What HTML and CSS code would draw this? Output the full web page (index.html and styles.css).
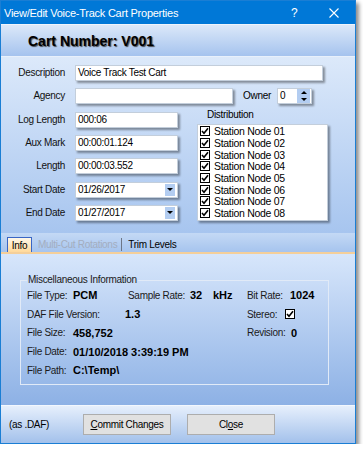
FILE: index.html
```html
<!DOCTYPE html>
<html>
<head>
<meta charset="utf-8">
<title>View/Edit Voice-Track Cart Properties</title>
<link rel="stylesheet" href="styles.css">
</head>
<body>
<div class="window">
  <div class="titlebar">
    <span class="title">View/Edit Voice-Track Cart Properties</span>
    <span class="help">?</span>
    <svg class="close" width="10" height="10" viewBox="0 0 10 10"><path d="M0.5 0.5 L9.5 9.5 M9.5 0.5 L0.5 9.5" stroke="#fff" stroke-width="1.1" fill="none"/></svg>
  </div>
  <div class="header"><span class="cartno">Cart Number: V001</span></div>
  <div class="form">
    <div class="row"><span class="lbl">Description</span><div class="field wide">Voice Track Test Cart</div></div>
    <div class="row"><span class="lbl">Agency</span><div class="field agency"></div><span class="owner-lbl">Owner</span>
      <div class="field spin"><span class="spinval">0</span><span class="spinbtns"><span class="sb"><span class="tri-up"></span></span><span class="sb"><span class="tri-down"></span></span></span></div>
    </div>
    <div class="lower">
      <div class="leftcol">
        <div class="row"><span class="lbl">Log Length</span><div class="field short">000:06</div></div>
        <div class="row"><span class="lbl">Aux Mark</span><div class="field short">00:00:01.124</div></div>
        <div class="row"><span class="lbl">Length</span><div class="field short">00:00:03.552</div></div>
        <div class="row"><span class="lbl">Start Date</span><div class="field short combo"><span class="combo-val">01/26/2017</span><span class="dd"><span class="tri-down"></span></span></div></div>
        <div class="row"><span class="lbl">End Date</span><div class="field short combo"><span class="combo-val">01/27/2017</span><span class="dd"><span class="tri-down"></span></span></div></div>
      </div>
      <div class="dist">
        <div class="dist-lbl">Distribution</div>
        <div class="listbox">
          <div class="item"><span class="cb"><svg width="8" height="8" viewBox="0 0 8 8"><path d="M1 4 L3 6.2 L7 1.2" stroke="#000" stroke-width="1.6" fill="none"/></svg></span>Station Node 01</div>
          <div class="item"><span class="cb"><svg width="8" height="8" viewBox="0 0 8 8"><path d="M1 4 L3 6.2 L7 1.2" stroke="#000" stroke-width="1.6" fill="none"/></svg></span>Station Node 02</div>
          <div class="item"><span class="cb"><svg width="8" height="8" viewBox="0 0 8 8"><path d="M1 4 L3 6.2 L7 1.2" stroke="#000" stroke-width="1.6" fill="none"/></svg></span>Station Node 03</div>
          <div class="item"><span class="cb"><svg width="8" height="8" viewBox="0 0 8 8"><path d="M1 4 L3 6.2 L7 1.2" stroke="#000" stroke-width="1.6" fill="none"/></svg></span>Station Node 04</div>
          <div class="item"><span class="cb"><svg width="8" height="8" viewBox="0 0 8 8"><path d="M1 4 L3 6.2 L7 1.2" stroke="#000" stroke-width="1.6" fill="none"/></svg></span>Station Node 05</div>
          <div class="item"><span class="cb"><svg width="8" height="8" viewBox="0 0 8 8"><path d="M1 4 L3 6.2 L7 1.2" stroke="#000" stroke-width="1.6" fill="none"/></svg></span>Station Node 06</div>
          <div class="item"><span class="cb"><svg width="8" height="8" viewBox="0 0 8 8"><path d="M1 4 L3 6.2 L7 1.2" stroke="#000" stroke-width="1.6" fill="none"/></svg></span>Station Node 07</div>
          <div class="item"><span class="cb"><svg width="8" height="8" viewBox="0 0 8 8"><path d="M1 4 L3 6.2 L7 1.2" stroke="#000" stroke-width="1.6" fill="none"/></svg></span>Station Node 08</div>
        </div>
      </div>
    </div>
  </div>
  <div class="tabs">
    <span class="tab active">Info</span>
    <span class="tab disabled">Multi-Cut Rotations</span>
    <span class="tabsep"></span>
    <span class="tab">Trim Levels</span>
  </div>
  <div class="panel">
    <fieldset class="group">
      <legend>Miscellaneous Information</legend>
      <div class="irow"><span class="k w46">File Type:</span><span class="v w55">PCM</span><span class="k w62">Sample Rate:</span><span class="v w23">32</span><span class="v w34">kHz</span><span class="k w43">Bit Rate:</span><span class="v">1024</span></div>
      <div class="irow"><span class="k w98">DAF File Version:</span><span class="v w122">1.3</span><span class="k w38">Stereo:</span><span class="cb"><svg width="8" height="8" viewBox="0 0 8 8"><path d="M1 4 L3 6.2 L7 1.2" stroke="#000" stroke-width="1.6" fill="none"/></svg></span></div>
      <div class="irow"><span class="k w46">File Size:</span><span class="v w174">458,752</span><span class="k w44">Revision:</span><span class="v">0</span></div>
      <div class="irow"><span class="k w46">File Date:</span><span class="v">01/10/2018 3:39:19 PM</span></div>
      <div class="irow"><span class="k w46">File Path:</span><span class="v">C:\Temp\</span></div>
    </fieldset>
  </div>
  <div class="footer">
    <span class="astype">(as .DAF)</span>
    <span class="btn"><u>C</u>ommit Changes</span>
    <span class="btn">Cl<u>o</u>se</span>
  </div>
</div>
</body>
</html>
```
FILE: styles.css
```css
* { box-sizing: border-box; }
html, body { margin: 0; padding: 0; background: #fff; }
body {
  font-family: "Liberation Sans", Arial, sans-serif;
  font-size: 10px;
  letter-spacing: -0.3px;
  color: #000;
}
.window {
  width: 356px;
  height: 444px;
  border: 1px solid #1a7ed4;
  box-shadow: 3px 3px 4px rgba(0, 0, 0, 0.45);
  display: flex;
  flex-direction: column;
  background: #c9dcf6;
}
.titlebar {
  height: 23px;
  flex: none;
  background: #0078d7;
  color: #fff;
  display: flex;
  align-items: center;
  padding-left: 3px;
  font-size: 11px;
  letter-spacing: -0.25px;
}
.title { flex: 1; }
.help { width: 8px; font-size: 12px; margin-right: 30px; }
.close { margin-right: 16px; }
.header {
  height: 33px;
  flex: none;
  background: linear-gradient(#dbe8f9, #a5c3ee);
  border-top: 1px solid #eef4fc;
  border-bottom: 1px solid #e8f0fb;
  padding-left: 27px;
  display: flex;
  align-items: center;
}
.cartno {
  font-weight: bold;
  font-size: 14px;
  letter-spacing: 0;
  text-shadow: 1px 1px 1px rgba(50, 50, 50, 0.85);
}
.form {
  height: 176px;
  flex: none;
  background: linear-gradient(#dce9fa, #a7c5ef);
  padding-top: 8px;
}
.row { display: flex; height: 23.33px; align-items: flex-start; }
.lbl { width: 64px; text-align: right; line-height: 15px; margin-right: 10px; color: #111; }
.field {
  height: 16px;
  background: #fff;
  border: 1px solid #c3cedb;
  box-shadow: 2px 2px 2px rgba(0, 0, 0, 0.38);
  line-height: 14px;
  padding-left: 2px;
}
.wide { width: 248px; }
.agency { width: 158px; }
.short { width: 103px; }
.owner-lbl { margin-left: 10px; width: 34px; line-height: 15px; }
.spin { width: 35px; display: flex; }
.spinval { flex: 1; }
.spinbtns { width: 13px; margin-right: 1px; display: flex; flex-direction: column; }
.sb { height: 7px; background: #b3cdf1; display: flex; align-items: center; justify-content: center; }
.tri-up { width: 0; height: 0; border-left: 3px solid transparent; border-right: 3px solid transparent; border-bottom: 3px solid #000; }
.tri-down { width: 0; height: 0; border-left: 3px solid transparent; border-right: 3px solid transparent; border-top: 3px solid #000; }
.combo { display: flex; }
.combo-val { flex: 1; }
.dd { width: 10px; height: 12px; margin: 1px 2px 0 0; background: #b3cdf1; display: flex; align-items: center; justify-content: center; }
.lower { display: flex; }
.leftcol { width: 177px; }
.dist { margin-left: 19px; margin-top: -3px; }
.dist-lbl { height: 12px; line-height: 12px; padding-left: 10px; margin-bottom: 3px; }
.listbox {
  width: 131px;
  height: 97px;
  background: #fff;
  border: 1px solid #c3cedb;
  box-shadow: 2px 2px 2px rgba(0, 0, 0, 0.38);
  padding: 1px 0 0 2px;
}
.item { height: 11.67px; display: flex; align-items: center; gap: 4px; font-size: 10.5px; }
.cb {
  width: 10px; height: 10px; flex: none;
  border: 1px solid #000; background: #fff;
  display: flex; align-items: center; justify-content: center;
}
.tabs {
  height: 21px;
  flex: none;
  display: flex;
  align-items: flex-end;
  padding-left: 6px;
  background: linear-gradient(#c4d9f5, #a6c4ee);
  border-bottom: 2px solid #f4cf9a;
}
.tab { height: 15px; line-height: 15px; padding: 0 4px 0 6px; }
.tab.active {
  width: 25px; padding: 0; text-align: center;
  border: 1px solid #3a66c4; border-bottom: none;
  background: linear-gradient(#fff8ea, #ffd99a);
}
.tab.disabled { color: #a3adbf; }
.tabsep { width: 1px; height: 13px; margin-bottom: 1px; background: #6d7686; }
.panel {
  height: 151px;
  flex: none;
  background: linear-gradient(#d7e6fb, #8db1e5);
  padding: 20px 0 0 19px;
}
.group {
  width: 309px;
  height: 111px;
  margin: 0;
  padding: 0 0 0 6px;
  border: 1px solid #e1eaf7;
}
.group legend { padding: 0 1px; line-height: 12px; color: #1a1a1a; }
.irow { display: flex; align-items: center; height: 18.75px; }
.k { color: #1a1a1a; }
.v { font-weight: bold; font-size: 11px; letter-spacing: 0; }
.w46 { width: 46px; }
.w55 { width: 55px; }
.w62 { width: 62px; }
.w23 { width: 23px; }
.w34 { width: 34px; }
.w43 { width: 43px; }
.w98 { width: 98px; }
.w122 { width: 122px; }
.w38 { width: 38px; }
.w174 { width: 174px; }
.w44 { width: 44px; }
.footer {
  height: 38px;
  flex: none;
  background: linear-gradient(#e6effc, #a3c1eb);
  border-top: 1px solid #f2f7fe;
  display: flex;
  align-items: center;
  padding-left: 8px;
}
.astype { width: 74px; }
.btn {
  width: 88px; height: 21px;
  background: #e1e1e1;
  border: 1px solid #adadad;
  text-align: center;
  line-height: 19px;
}
.btn + .btn { margin-left: 16px; }
```
